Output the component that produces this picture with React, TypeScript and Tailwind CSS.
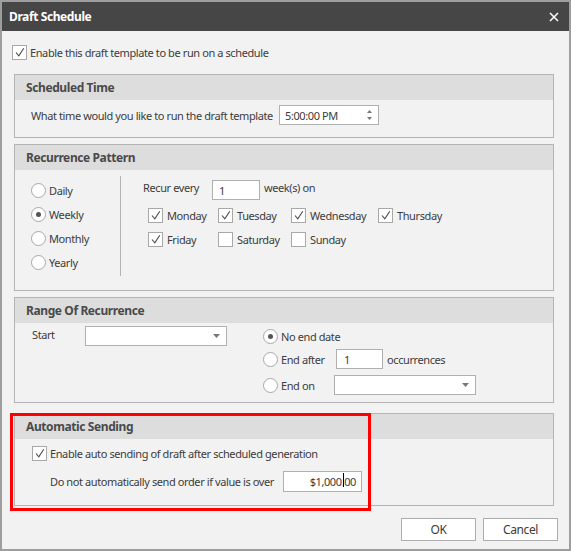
import React from 'react';

const font = { fontFamily: '"Noto Sans", "Open Sans", sans-serif' };

function Check({ checked }: { checked?: boolean }) {
  return (
    <span className="relative flex h-[15px] w-[15px] shrink-0 border border-[#a8a8a8] bg-white">
      {checked && (
        <svg className="absolute left-0 top-0" width="13" height="13" viewBox="0 0 13 13">
          <path d="M3 6.5 L5.8 9.8 L10.8 2.2" fill="none" stroke="#4a4a4a" strokeWidth="1.1" />
        </svg>
      )}
    </span>
  );
}

function Radio({ selected }: { selected?: boolean }) {
  return (
    <span className="flex h-[15px] w-[15px] shrink-0 items-center justify-center rounded-full border border-[#a8a8a8] bg-white">
      {selected && <span className="h-[5px] w-[5px] rounded-full bg-[#555]" />}
    </span>
  );
}

function Arrow() {
  return (
    <svg width="7" height="4" viewBox="0 0 7 4">
      <path d="M0 0 L7 0 L3.5 4 Z" fill="#777" />
    </svg>
  );
}

function Dropdown({ width }: { width: string }) {
  return (
    <div className={`flex h-[20px] items-center justify-end border border-[#b0b0b0] bg-white pr-[6px] ${width}`}>
      <Arrow />
    </div>
  );
}

function Group({ title, className, children }: { title: string; className: string; children: React.ReactNode }) {
  return (
    <div className={`ml-[2px] mr-[4px] flex flex-col border border-[#b4b4b4] ${className}`}>
      <div className="flex h-[25px] shrink-0 items-center bg-[#dddddd] pl-[11px] text-[12px] font-bold text-[#4a4a4a]">
        {title}
      </div>
      {children}
    </div>
  );
}

const days: [string, boolean, string][] = [
  ['Monday', true, 'w-[70px]'],
  ['Tuesday', true, 'w-[73px]'],
  ['Wednesday', true, 'w-[87px]'],
  ['Thursday', true, 'w-[90px]'],
];
const days2: [string, boolean, string][] = [
  ['Friday', true, 'w-[70px]'],
  ['Saturday', false, 'w-[73px]'],
  ['Sunday', false, 'w-[87px]'],
];

function Day({ label, checked, width }: { label: string; checked: boolean; width: string }) {
  return (
    <div className={`flex items-center gap-[4px] ${width}`}>
      <Check checked={checked} />
      <span>{label}</span>
    </div>
  );
}

export default function App() {
  return (
    <div
      style={font}
      className="relative flex h-[551px] w-[571px] flex-col whitespace-nowrap border-2 border-[#9e9e9e] bg-[#f2f2f2] text-[11px] leading-none tracking-[-0.4px] text-[#3c3c3c]"
    >
      <div className="flex h-[29px] shrink-0 items-center justify-between bg-[#464646] pl-[7px] pr-[10px] text-white">
        <span className="text-[12px] font-bold">Draft Schedule</span>
        <svg width="10" height="10" viewBox="0 0 10 10">
          <path d="M1 1 L9 9 M9 1 L1 9" stroke="#fff" strokeWidth="1.5" />
        </svg>
      </div>

      <div className="flex flex-col pl-[10px] pr-[11px]">
        <div className="mt-[14px] flex h-[15px] items-center gap-[3px]">
          <Check checked />
          <span>Enable this draft template to be run on a schedule</span>
        </div>

        <Group title="Scheduled Time" className="mt-[14px] h-[64px]">
          <div className="flex items-center pl-[16px] pt-[5px]">
            <span className="w-[248px]">What time would you like to run the draft template</span>
            <div className="flex h-[20px] w-[100px] items-center justify-between border border-[#b0b0b0] bg-white pl-[5px] pr-[5px]">
              <span>5:00:00 PM</span>
              <svg width="7" height="12" viewBox="0 0 7 12">
                <path d="M1 4 L6 4 L3.5 1 Z M1 8 L6 8 L3.5 11 Z" fill="#777" />
              </svg>
            </div>
          </div>
        </Group>

        <Group title="Recurrence Pattern" className="mt-[6px] h-[147px]">
          <div className="flex">
            <div className="flex w-[105px] flex-col gap-[9px] pl-[16px] pt-[13px]">
              {['Daily', 'Weekly', 'Monthly', 'Yearly'].map((r) => (
                <div key={r} className="flex h-[15px] items-center gap-[3px]">
                  <Radio selected={r === 'Weekly'} />
                  <span>{r}</span>
                </div>
              ))}
            </div>
            <div className="mt-[6px] h-[100px] w-px bg-[#b4b4b4]" />
            <div className="flex flex-col pl-[22px] pt-[10px]">
              <div className="flex h-[20px] items-center">
                <span className="w-[69px] pb-[6px]">Recur every</span>
                <div className="flex h-[20px] w-[48px] items-center border border-[#b0b0b0] bg-white pl-[6px]">1</div>
                <span className="ml-[4px] pb-[6px]">week(s) on</span>
              </div>
              <div className="ml-[5px] mt-[8px] flex h-[15px]">
                {days.map(([l, c, w]) => (
                  <Day key={l} label={l} checked={c} width={w} />
                ))}
              </div>
              <div className="ml-[5px] mt-[9px] flex h-[15px]">
                {days2.map(([l, c, w]) => (
                  <Day key={l} label={l} checked={c} width={w} />
                ))}
              </div>
            </div>
          </div>
        </Group>

        <Group title="Range Of Recurrence" className="mt-[6px] h-[106px]">
          <div className="flex pt-[3px]">
            <div className="flex h-[20px] w-[248px] items-center pl-[17px]">
              <span className="w-[53px] pb-[3px]">Start</span>
              <Dropdown width="w-[142px]" />
            </div>
            <div className="flex flex-col">
              <div className="flex h-[20px] items-center gap-[3px]">
                <Radio selected />
                <span>No end date</span>
              </div>
              <div className="mt-[3px] flex h-[20px] items-center">
                <div className="flex w-[73px] items-center gap-[3px]">
                  <Radio />
                  <span>End after</span>
                </div>
                <div className="flex h-[20px] w-[47px] items-center border border-[#b0b0b0] bg-white pl-[7px]">1</div>
                <span className="ml-[4px]">occurrences</span>
              </div>
              <div className="mt-[6px] flex h-[20px] items-center">
                <div className="flex w-[71px] items-center gap-[3px]">
                  <Radio />
                  <span>End on</span>
                </div>
                <Dropdown width="w-[142px]" />
              </div>
            </div>
          </div>
        </Group>

        <Group title="Automatic Sending" className="mt-[10px] h-[93px]">
          <div className="flex flex-col pl-[17px] pt-[7px]">
            <div className="flex h-[15px] items-center gap-[3px]">
              <Check checked />
              <span>Enable auto sending of draft after scheduled generation</span>
            </div>
            <div className="mt-[10px] flex items-center pl-[18px]">
              <span className="w-[233px]">Do not automatically send order if value is over</span>
              <div className="flex h-[21px] w-[79px] items-center justify-end border border-[#b0b0b0] bg-white pr-[5px]">
                <span>$1,000</span>
                <span className="relative">
                  .
                  <span className="absolute left-[1px] top-[-3px] h-[14px] w-px bg-black" />
                </span>
                <span>00</span>
              </div>
            </div>
          </div>
        </Group>

        <div className="mt-[12px] flex justify-end gap-[7px]">
          <div className="flex h-[23px] w-[75px] items-center justify-center border border-[#adadad] bg-white text-[12px]">OK</div>
          <div className="flex h-[23px] w-[75px] items-center justify-center border border-[#adadad] bg-white text-[12px]">Cancel</div>
        </div>
      </div>

      <div className="absolute left-[8px] top-[411px] h-[98px] w-[361px] border-[3px] border-[#ff0000]" />
    </div>
  );
}
